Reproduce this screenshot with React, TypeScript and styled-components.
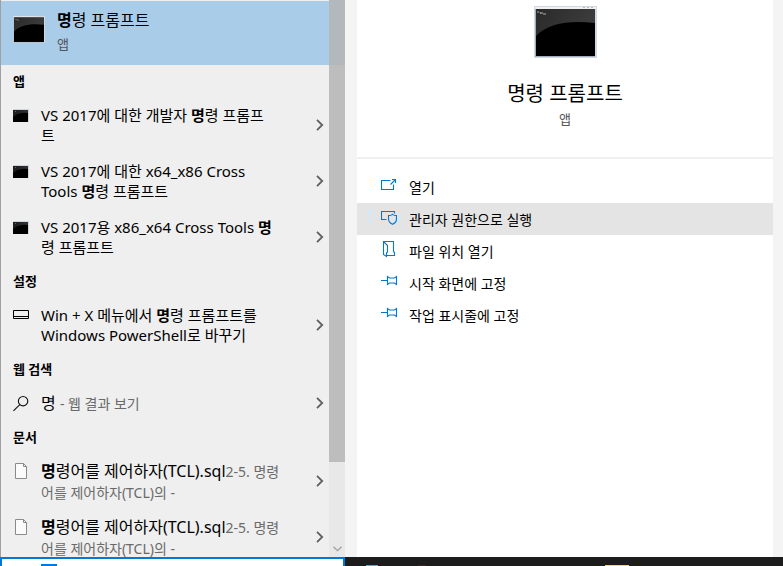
import React, { useState } from "react";
import styled, { createGlobalStyle, css } from "styled-components";

const GlobalStyle = createGlobalStyle`
  * { box-sizing: border-box; }
  body {
    margin: 0;
    background: #f4f4f4;
    color: #000;
    font-family: "Noto Sans", "Noto Sans CJK KR", sans-serif;
  }
  button { font: inherit; color: inherit; border: 0; padding: 0; background: none; text-align: left; cursor: default; }
  h1, h2, p, ul { margin: 0; padding: 0; }
  ul { list-style: none; }
`;

const Screen = styled.div`
  display: flex;
  flex-direction: column;
  height: 100vh;
  overflow: hidden;
`;

const Flyout = styled.main`
  flex: 1;
  min-height: 0;
  display: grid;
  grid-template-columns: 345px minmax(0, 1fr);
  column-gap: 12px;
  padding-right: 10px;
`;

const ResultsPane = styled.section`
  display: flex;
  min-height: 0;
  background: #efefef;
  border-left: 1px solid #a0a0a0;
`;

const Results = styled.div`
  flex: 1;
  min-width: 0;
  overflow: hidden;
  padding-top: 1px;
`;

const BestMatch = styled.button`
  display: flex;
  align-items: flex-start;
  gap: 12px;
  width: 100%;
  height: 64px;
  padding: 8px 12px;
  background: #a9cce9;
  font-size: 16px;
  line-height: 22px;

  & > svg { margin-top: 7px; }
`;

const Caption = styled.small`
  display: block;
  color: #555;
  font-size: 13px;
  line-height: 26px;
`;

const GroupTitle = styled.h2`
  padding-left: 12px;
  font-size: 13px;
  font-weight: 700;
  line-height: 32px;
`;

const Row = styled.li<{ $compact?: boolean; $large?: boolean }>`
  display: flex;
  height: ${(p) => (p.$compact ? 36 : 56)}px;
  font-size: ${(p) => (p.$large ? 16 : 15)}px;
`;

const RowMain = styled.button`
  display: flex;
  align-items: flex-start;
  flex: 1;
  min-width: 0;
  gap: 12px;
  padding: 8px 0 8px 12px;
  line-height: 20px;
  white-space: nowrap;
`;

const IconSlot = styled.span`
  display: flex;
  align-items: center;
  flex: none;
  width: 16px;
  height: 20px;
`;

const Line = styled.span`
  display: block;
`;

const Muted = styled.span`
  color: #6a6a6a;
  font-size: 14px;
`;

const MoreButton = styled.button`
  display: grid;
  place-items: center;
  width: 18px;
`;

const Scrollbar = styled.div`
  display: flex;
  flex-direction: column;
  width: 16px;
  background: #e8e8e8;
`;

const Thumb = styled.div`
  flex: 1;
  background: linear-gradient(#b3b8bc 65px, #bdbdbd 65px);
`;

const ScrollDown = styled.button`
  display: grid;
  place-items: end center;
  height: 95px;
  padding-bottom: 5px;
`;

const Details = styled.section`
  background: #fff;
  min-width: 0;
`;

const Hero = styled.header`
  display: flex;
  flex-direction: column;
  align-items: center;
  height: 159px;
  padding-top: 6px;
  border-bottom: 2px solid #f0f0f0;
`;

const AppTitle = styled.h1`
  margin-top: 22px;
  font-size: 20px;
  font-weight: 400;
  line-height: 28px;
`;

const AppKind = styled.p`
  color: #555;
  font-size: 13px;
  line-height: 22px;
`;

const Actions = styled.ul`
  padding-top: 12px;
`;

const Action = styled.button<{ $active: boolean }>`
  display: flex;
  gap: 12px;
  width: 100%;
  height: 32px;
  padding: 6px 24px 4px;
  font-size: 14px;
  line-height: 22px;
  ${(p) => p.$active && css`background: #e4e4e4;`}

  & > svg { flex: none; }
`;

const Taskbar = styled.footer`
  display: flex;
  height: 9px;
  background: #1c1c1c;
`;

const SearchBox = styled.div`
  width: 345px;
  height: 9px;
  padding: 5px 0 0 39px;
  background: #fff;
  border: 2px solid #0078d7;
  border-bottom: 0;
`;

const Selection = styled.div`
  width: 16px;
  height: 2px;
  background: #0078d7;
`;

const TaskIcons = styled.div`
  display: flex;
  align-items: flex-end;
  padding-left: 21px;
`;

const TaskMark = styled.i<{ $color: string; $width: number; $gap: number }>`
  width: ${(p) => p.$width}px;
  height: 1px;
  margin-right: ${(p) => p.$gap}px;
  background: ${(p) => p.$color};
`;

function ConsoleIcon({ id, width, height }: { id: string; width: number; height: number }) {
  return (
    <svg width={width} height={height} viewBox="0 0 63 52" preserveAspectRatio="none" aria-hidden="true">
      <defs>
        <linearGradient id={id} x1="0" y1="0" x2="1" y2="0.3">
          <stop offset="0" stopColor="#2a2a2a" />
          <stop offset="1" stopColor="#3c3c3c" />
        </linearGradient>
      </defs>
      <rect width="63" height="52" fill="#d3d8df" />
      <rect x="1" y="1" width="61" height="2" fill="#eef0f3" />
      <rect x="1" y="3" width="60" height="48" fill="#a3aebd" />
      <rect x="2" y="3" width="59" height="47" fill="#000" />
      <path d="M2 3H61V17C36 14 14 17 2 30Z" fill={`url(#${id})`} />
      <path d="M3 6h2M6 6l1 2M8 6v2M9 8h3" stroke="#aaa" strokeWidth="1" fill="none" />
      <path d="M49 1.5h2M53 1.5h2M57 1.5h2" stroke="#b4bac2" />
    </svg>
  );
}

function SmallConsole({ id }: { id: string }) {
  return (
    <svg width="16" height="13" viewBox="0 0 16 13" aria-hidden="true">
      <defs>
        <linearGradient id={id}>
          <stop offset="0" stopColor="#1c1c1c" />
          <stop offset="1" stopColor="#303030" />
        </linearGradient>
      </defs>
      <rect width="16" height="13" fill="#cdd4dc" />
      <rect y="1" width="15" height="12" fill="#000" />
      <path d="M0 1H15V4Q6 3 0 8Z" fill={`url(#${id})`} />
      <path d="M2 2.5h1" stroke="#666" />
    </svg>
  );
}

const WindowIcon = () => (
  <svg width="16" height="10" viewBox="0 0 16 10" fill="none" stroke="#000" aria-hidden="true">
    <path d="M.5.5h15v8H.5zM.5 6.5h15" />
  </svg>
);

const SearchIcon = () => (
  <svg width="17" height="17" viewBox="0 0 17 17" fill="none" stroke="#111" strokeWidth="1.2" aria-hidden="true">
    <circle cx="10.7" cy="6" r="5" />
    <path d="M7.2 9.6L.5 16.3" />
  </svg>
);

const PageIcon = () => (
  <svg width="16" height="17" viewBox="0 0 16 17" aria-hidden="true">
    <path d="M2.5.5h8l3 3v12h-11z" fill="#fbfbfb" stroke="#8a8a8a" />
    <path d="M10.5.5v3h3" fill="none" stroke="#8a8a8a" />
  </svg>
);

const Chevron = () => (
  <svg width="8" height="12" viewBox="0 0 8 12" fill="none" stroke="#5f5f5f" strokeWidth="1.8" aria-hidden="true">
    <path d="M1 .8L6.2 6 1 11.2" />
  </svg>
);

const ActionSvg = ({ children }: { children: React.ReactNode }) => (
  <svg width="16" height="18" viewBox="0 0 16 18" fill="none" stroke="#0078d7" strokeWidth="1.1" aria-hidden="true">
    {children}
  </svg>
);

const OpenIcon = () => (
  <ActionSvg>
    <path d="M9.5 3.5h-9v9h12v-5M9.5 7.5l5-5M11 2.5h3.5V6" />
  </ActionSvg>
);

const AdminIcon = () => (
  <ActionSvg>
    <path d="M5.5 10.5h-5v-8h13v2" />
    <path d="M11.5 5.3c1.2 1 2.5 1.3 4 1.3v3.5c0 2.5-1.7 4.2-4 5.2-2.3-1-4-2.7-4-5.2V6.6c1.5 0 2.8-.3 4-1.3z" />
  </ActionSvg>
);

const FolderIcon = () => (
  <ActionSvg>
    <path d="M2.5.5h10v10l1 1v3H6M2.5.5v13l3 2V12l1-1V4.5z" />
  </ActionSvg>
);

const PinIcon = () => (
  <ActionSvg>
    <path d="M0 7.5h6.5M6.5 3.5v8l2-1.5h5l2 1.5v-8l-2 1.5h-5z" />
  </ActionSvg>
);

interface Result {
  icon: React.ReactNode;
  label: string;
  lines: React.ReactNode[];
  compact?: boolean;
  large?: boolean;
}

const groups: { title: string; items: Result[] }[] = [
  {
    title: "앱",
    items: [
      {
        icon: <SmallConsole id="con1" />,
        label: "VS 2017에 대한 개발자 명령 프롬프트",
        lines: [<>VS 2017에 대한 개발자 <b>명</b>령 프롬프</>, "트"],
      },
      {
        icon: <SmallConsole id="con2" />,
        label: "x64_x86 Cross Tools",
        lines: ["VS 2017에 대한 x64_x86 Cross", <>Tools <b>명</b>령 프롬프트</>],
      },
      {
        icon: <SmallConsole id="con3" />,
        label: "x86_x64 Cross Tools",
        lines: [<>VS 2017용 x86_x64 Cross Tools <b>명</b></>, "령 프롬프트"],
      },
    ],
  },
  {
    title: "설정",
    items: [
      {
        icon: <WindowIcon />,
        label: "Windows PowerShell",
        lines: [<>Win + X 메뉴에서 <b>명</b>령 프롬프트를</>, "Windows PowerShell로 바꾸기"],
      },
    ],
  },
  {
    title: "웹 검색",
    items: [
      {
        icon: <SearchIcon />,
        label: "웹 결과",
        lines: [<>명 <Muted>- 웹 결과 보기</Muted></>],
        compact: true,
        large: true,
      },
    ],
  },
  {
    title: "문서",
    items: ["문서 1", "문서 2"].map((label) => ({
      icon: <PageIcon />,
      label,
      large: true,
      lines: [
        <><b>명</b>령어를 제어하자(TCL).sql<Muted>2-5. 명령</Muted></>,
        <Muted>어를 제어하자(TCL)의 -</Muted>,
      ],
    })),
  },
];

const actions = [
  { text: "열기", Icon: OpenIcon },
  { text: "관리자 권한으로 실행", Icon: AdminIcon },
  { text: "파일 위치 열기", Icon: FolderIcon },
  { text: "시작 화면에 고정", Icon: PinIcon },
  { text: "작업 표시줄에 고정", Icon: PinIcon },
];

export default function App() {
  const [active, setActive] = useState(1);

  return (
    <Screen>
      <GlobalStyle />
      <Flyout>
        <ResultsPane>
          <Results>
            <BestMatch>
              <ConsoleIcon id="best" width={32} height={27} />
              <span>
                <b>명</b>령 프롬프트
                <Caption>앱</Caption>
              </span>
            </BestMatch>
            {groups.map((group) => (
              <section key={group.title}>
                <GroupTitle>{group.title}</GroupTitle>
                <ul>
                  {group.items.map((item) => (
                    <Row key={item.label} $compact={item.compact} $large={item.large}>
                      <RowMain>
                        <IconSlot>{item.icon}</IconSlot>
                        <span>
                          {item.lines.map((line, i) => (
                            <Line key={i}>{line}</Line>
                          ))}
                        </span>
                      </RowMain>
                      <MoreButton aria-label={item.label}>
                        <Chevron />
                      </MoreButton>
                    </Row>
                  ))}
                </ul>
              </section>
            ))}
          </Results>
          <Scrollbar>
            <Thumb />
            <ScrollDown aria-label="아래로">
              <svg width="9" height="6" viewBox="0 0 9 6" fill="none" stroke="#a0a0a0" strokeWidth="1.3">
                <path d="M.5.7L4.5 4.7 8.5.7" />
              </svg>
            </ScrollDown>
          </Scrollbar>
        </ResultsPane>
        <Details>
          <Hero>
            <ConsoleIcon id="hero" width={63} height={52} />
            <AppTitle>명령 프롬프트</AppTitle>
            <AppKind>앱</AppKind>
          </Hero>
          <Actions>
            {actions.map(({ text, Icon }, i) => (
              <li key={text}>
                <Action $active={i === active} onClick={() => setActive(i)}>
                  <Icon />
                  {text}
                </Action>
              </li>
            ))}
          </Actions>
        </Details>
      </Flyout>
      <Taskbar>
        <SearchBox>
          <Selection />
        </SearchBox>
        <TaskIcons>
          <TaskMark $color="#3fb8c4" $width={12} $gap={40} />
          <TaskMark $color="#3a2424" $width={8} $gap={179} />
          <TaskMark $color="#f5e03a" $width={24} $gap={0} />
        </TaskIcons>
      </Taskbar>
    </Screen>
  );
}
